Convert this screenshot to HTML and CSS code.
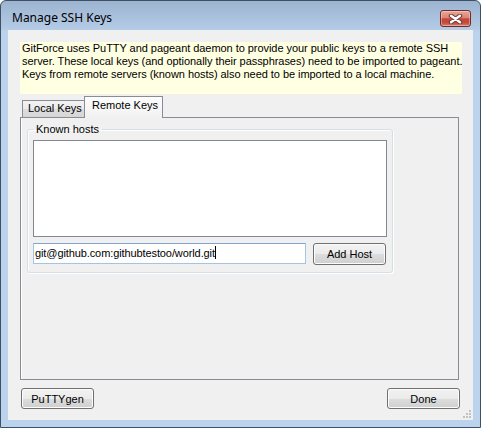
FILE: index.html
```html
<!DOCTYPE html>
<html>
<head>
<meta charset="utf-8">
<link rel="stylesheet" href="styles.css">
</head>
<body>
<div class="window">
  <div class="titlebar">
    <span class="title">Manage SSH Keys</span>
    <div class="close">
      <svg width="15" height="10" viewBox="0 0 15 10">
        <path d="M3 1.8 L12 8.2 M12 1.8 L3 8.2" stroke="#6b3a36" stroke-width="4.4" stroke-linecap="round" fill="none"/>
        <path d="M3 1.8 L12 8.2 M12 1.8 L3 8.2" stroke="#ffffff" stroke-width="2.4" stroke-linecap="round" fill="none"/>
      </svg>
    </div>
  </div>
  <div class="client">
    <div class="info">GitForce uses PuTTY and pageant daemon to provide your public keys to a remote SSH<br>server. These local keys (and optionally their passphrases) need to be imported to pageant.<br>Keys from remote servers (known hosts) also need to be imported to a local machine.</div>
    <div class="tabctl">
      <div class="tabstrip">
        <div class="tab local">Local Keys</div>
        <div class="tab active">Remote Keys</div>
      </div>
      <div class="panel">
        <fieldset class="group">
          <legend>Known hosts</legend>
          <div class="listbox"></div>
          <div class="row">
            <div class="textbox">git@github.com:githubtestoo/world.git<span class="caret"></span></div>
            <button class="btn add">Add Host</button>
          </div>
        </fieldset>
      </div>
    </div>
    <div class="footer">
      <button class="btn">PuTTYgen</button>
      <button class="btn">Done</button>
    </div>
    <svg class="grip" width="10" height="10" viewBox="0 0 10 10">
      <rect x="7" y="1" width="2" height="2" fill="#c2c2c2"/>
      <rect x="4" y="4" width="2" height="2" fill="#c2c2c2"/>
      <rect x="7" y="4" width="2" height="2" fill="#c2c2c2"/>
      <rect x="1" y="7" width="2" height="2" fill="#c2c2c2"/>
      <rect x="4" y="7" width="2" height="2" fill="#c2c2c2"/>
      <rect x="7" y="7" width="2" height="2" fill="#c2c2c2"/>
    </svg>
  </div>
</div>
</body>
</html>
```
FILE: styles.css
```css
* { box-sizing: border-box; }
html, body { margin: 0; padding: 0; }
body {
  width: 481px;
  height: 428px;
  overflow: hidden;
  background: #ffffff;
  font-family: "Liberation Sans", Arial, sans-serif;
  font-size: 11px;
  color: #000;
}
.window {
  width: 481px;
  height: 428px;
  border: 1px solid #3e5063;
  border-radius: 6px 6px 0 0;
  background: linear-gradient(#9cb4d0 0px, #b4cbe6 28px, #bcd3ed 30px, #bcd3ed 100%);
  padding: 0 7px 7px 7px;
  display: flex;
  flex-direction: column;
}
.titlebar {
  height: 29px;
  display: flex;
  align-items: flex-start;
  justify-content: space-between;
}
.title {
  font-family: "Noto Sans", "Open Sans", sans-serif;
  font-size: 12px;
  line-height: 16px;
  margin: 9px 0 0 4px;
  color: #000;
}
.close {
  width: 31px;
  height: 17px;
  margin: 9px 2px 0 0;
  border: 1px solid #6f2b24;
  border-radius: 3px;
  background: linear-gradient(#e7a69b 0%, #da8576 45%, #c4463a 52%, #c54b3c 78%, #d9806c 100%);
  box-shadow: inset 0 0 0 1px rgba(255, 255, 255, 0.35);
  display: flex;
  align-items: center;
  justify-content: center;
}
.close svg { display: block; }
.client {
  position: relative;
  height: 390px;
  background: #f0f0f0;
  padding: 12px 11px 0 12px;
  display: flex;
  flex-direction: column;
}
.info {
  height: 52px;
  background: #ffffe1;
  padding: 0 2px;
  line-height: 13px;
  white-space: nowrap;
  letter-spacing: -0.05px;
}
.tabctl {
  margin-top: 2px;
  width: 439px;
}
.tabstrip {
  position: relative;
  z-index: 1;
  height: 21px;
  display: flex;
  align-items: flex-end;
  padding-left: 2px;
}
.tab {
  border: 1px solid #898c95;
  border-bottom: none;
  white-space: nowrap;
}
.tab.local {
  width: 63px;
  height: 17px;
  margin-right: -1px;
  padding-left: 5px;
  line-height: 15px;
  background: linear-gradient(#f2f2f2 0%, #ebebeb 50%, #dddddd 51%, #d6d6d6 100%);
}
.tab.active {
  position: relative;
  width: 79px;
  height: 22px;
  margin-bottom: -1px;
  padding: 1px 0 0 7px;
  line-height: 15px;
  background: linear-gradient(#fdfdfd 0%, #f6f6f6 60%, #f0f0f0 100%);
}
.panel {
  height: 263px;
  border: 1px solid #898c95;
  background: #f0f0f0;
  box-shadow: inset 1px 0 0 #ffffff;
  padding: 5px 0 0 6px;
}
.group {
  margin: 0;
  width: 366px;
  min-width: 0;
  padding: 4px 5px 7px 5px;
  border: 1px solid #d5dfe5;
  border-radius: 3px;
  box-shadow: 1px 1px 0 #ffffff, inset 1px 1px 0 #ffffff;
}
.group legend {
  padding: 0 3px 0 3px;
  line-height: 13px;
}
.listbox {
  height: 97px;
  border: 1px solid #828790;
  background: #ffffff;
}
.row {
  margin-top: 6px;
  display: flex;
  align-items: flex-start;
  gap: 7px;
}
.textbox {
  width: 273px;
  height: 21px;
  border: 1px solid #a6c4e2;
  border-top-color: #7fa6cf;
  background: #ffffff;
  padding-left: 1px;
  line-height: 19px;
  white-space: nowrap;
  letter-spacing: -0.1px;
}
.caret {
  display: inline-block;
  width: 1px;
  height: 13px;
  background: #000;
  vertical-align: -2px;
}
.btn {
  font: inherit;
  color: #000;
  width: 73px;
  height: 21px;
  padding: 0;
  border: 1px solid #707070;
  border-radius: 3px;
  background: linear-gradient(#f2f2f2 0%, #ebebeb 50%, #dddddd 51%, #cfcfcf 100%);
  box-shadow: inset 0 0 0 1px #fcfcfc;
}
.btn.add { height: 22px; }
.footer {
  margin-top: 8px;
  display: flex;
  justify-content: space-between;
  padding: 0 2px 0 1px;
}
.grip {
  position: absolute;
  right: 1px;
  bottom: 1px;
}
```
